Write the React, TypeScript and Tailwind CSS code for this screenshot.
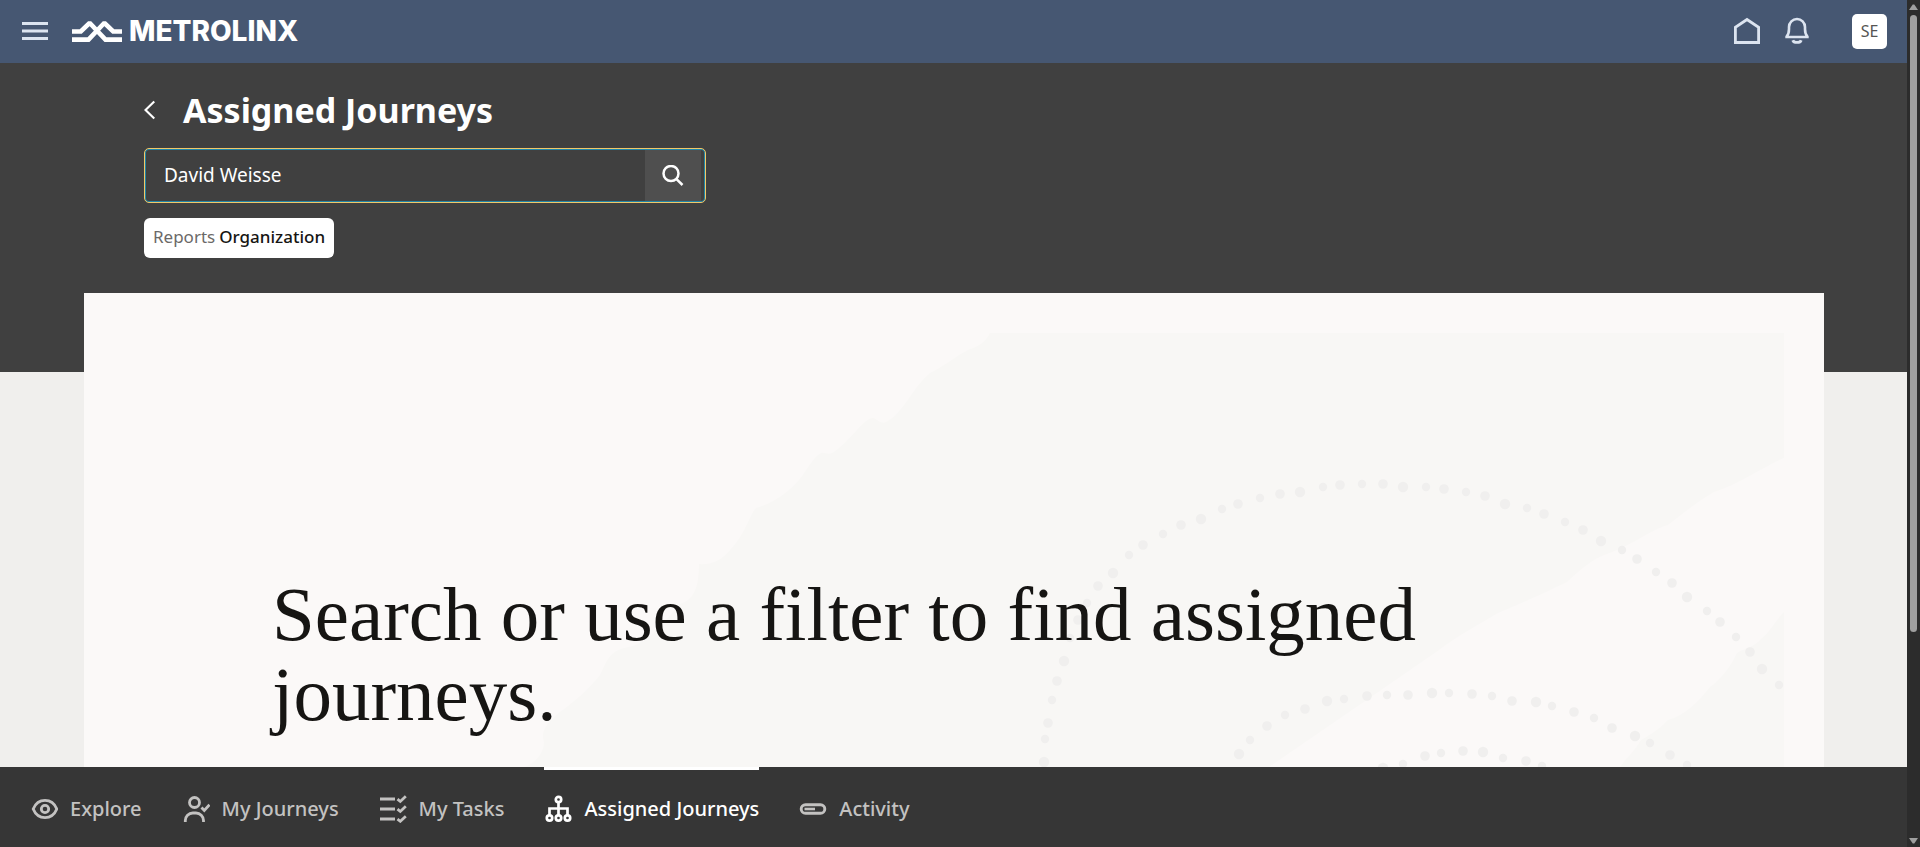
import type { ReactNode } from "react";

type Dot = [number, number];

const outerRing: Dot[] = [
  [1044, 762], [1045, 739], [1048, 723], [1052, 700], [1057, 681], [1064, 661], [1070, 638],
  [1078, 620], [1087, 603], [1098, 586], [1113, 573], [1129, 555], [1143, 545], [1163, 534],
  [1181, 525], [1201, 519], [1222, 509], [1238, 504], [1260, 498], [1280, 494], [1300, 492],
  [1323, 487], [1340, 485], [1362, 484], [1383, 484], [1403, 487], [1426, 487], [1444, 489],
  [1466, 492], [1485, 496], [1505, 504], [1527, 508], [1544, 514], [1565, 522], [1583, 530],
  [1601, 541], [1622, 550], [1637, 559], [1656, 572], [1672, 583], [1687, 597], [1707, 611],
  [1720, 622], [1736, 637], [1750, 652], [1762, 669], [1779, 685],
];

const middleRing: Dot[] = [
  [1239, 754], [1250, 740], [1267, 726], [1285, 715], [1305, 709], [1327, 701], [1344, 699],
  [1367, 696], [1387, 695], [1408, 695], [1432, 693], [1449, 693], [1472, 694], [1492, 696],
  [1512, 701], [1536, 702], [1552, 706], [1574, 712], [1594, 718], [1612, 728], [1635, 736],
  [1650, 743], [1670, 755], [1687, 765],
];

const innerRing: Dot[] = [
  [1383, 768], [1403, 764], [1425, 756], [1441, 753], [1463, 751], [1483, 752], [1503, 758],
  [1526, 761], [1542, 766],
];

const dotRadii = [5.2, 4.2, 4.8, 4.2, 4.8];

function Backdrop() {
  return (
    <svg
      className="pointer-events-none absolute top-10 right-10 h-[434px] w-[1260px]"
      viewBox="524 333 1260 434"
      aria-hidden="true"
    >
      <path
        fill="#f8f7f5"
        d="M990 333C985 343 977 347 970 349C957 355 948 364 930 373C912 388 903 414 886 422C880 425 876 417 872 418C862 420 848 444 832 453C828 455 824 452 821 453C812 458 806 472 799 480C790 490 777 502 756 508C750 514 745 535 730 550C722 560 712 565 699 564C699 582 696 600 680 604C664 622 650 642 629 647C608 650 606 664 600 675C588 690 574 702 560 712C548 722 540 730 544 742C544 754 534 764 524 767H1269L1384 688L1439 650C1460 634 1480 624 1498 613C1530 600 1550 590 1567 582C1582 568 1592 560 1604 555C1632 546 1650 530 1668 525C1690 508 1700 500 1714 492C1740 484 1764 466 1784 458V333Z"
      />
      <path
        fill="#f8f7f5"
        d="M1784 612C1776 620 1770 632 1762 638C1754 648 1744 648 1737 653C1730 668 1720 680 1710 687C1698 702 1684 716 1668 720C1656 732 1648 736 1641 740C1634 752 1626 758 1620 767H1784Z"
      />
      <g fill="#f0efee">
        {[outerRing, middleRing, innerRing].map((ring) =>
          ring.map(([x, y], i) => (
            <circle key={`${x}-${y}`} cx={x} cy={y} r={dotRadii[i % dotRadii.length]} />
          )),
        )}
      </g>
    </svg>
  );
}

function LogoMark() {
  return (
    <svg className="h-6 w-[52px]" viewBox="0 0 52 24" fill="none" stroke="#fff" strokeWidth="4.6" aria-hidden="true">
      <path d="M1 12.500H9.800L18 4.500H19.200L34.500 20.600H51" />
      <path d="M1 20.600H17.500L32.800 4.500H34L42.200 12.500H51" />
    </svg>
  );
}

const iconProps = {
  viewBox: "0 0 28 28",
  fill: "none",
  stroke: "currentColor",
  "aria-hidden": true,
} as const;

function ExploreIcon() {
  return (
    <svg {...iconProps} className="size-7" strokeWidth="2.8">
      <path d="M3.200 14C5.500 8.400 9.500 5.400 15 5.400S24.500 8.400 26.800 14C24.500 19.600 20.500 22.600 15 22.600S5.500 19.600 3.200 14Z" />
      <circle cx="15" cy="14" r="3.700" />
    </svg>
  );
}

function PersonCheckIcon() {
  return (
    <svg {...iconProps} className="size-7" strokeWidth="2.800">
      <circle cx="12.500" cy="7.500" r="5" />
      <path d="M3.300 27V25.500A7.500 7.500 0 0 1 10.800 18H14A7.500 7.500 0 0 1 21.500 25.500V27" />
      <path d="M19.500 12.500L22.300 15.500L27.500 9.700" />
    </svg>
  );
}

function TasksIcon() {
  return (
    <svg {...iconProps} className="size-7" strokeWidth="2.800">
      <path d="M1 4H16M1 14H16M1 24H16" />
      <path d="M18.500 4.200L21.300 6.500L26.800 1.300M18.500 14.200L21.300 16.500L26.800 11.300M18.500 24.200L21.300 26.300L26.800 21.300" />
    </svg>
  );
}

function HierarchyIcon() {
  return (
    <svg {...iconProps} className="size-7" strokeWidth="2.700">
      <circle cx="14.500" cy="4.500" r="2.700" />
      <circle cx="5.500" cy="23" r="2.700" />
      <circle cx="14.500" cy="23" r="2.700" />
      <circle cx="23.500" cy="23" r="2.700" />
      <path d="M14.500 7.200V20.300M5.500 20.300V13.500H23.500V20.300" />
    </svg>
  );
}

function ActivityIcon() {
  return (
    <svg {...iconProps} className="size-7" strokeWidth="2.900">
      <rect x="2.200" y="9.700" width="23.600" height="8.600" rx="4.300" />
      <path d="M5.500 14H16" strokeWidth="2.600" />
    </svg>
  );
}

const tabs: { label: string; icon: ReactNode; active?: boolean }[] = [
  { label: "Explore", icon: <ExploreIcon /> },
  { label: "My Journeys", icon: <PersonCheckIcon /> },
  { label: "My Tasks", icon: <TasksIcon /> },
  { label: "Assigned Journeys", icon: <HierarchyIcon />, active: true },
  { label: "Activity", icon: <ActivityIcon /> },
];

function TopBar() {
  return (
    <header className="flex h-[63px] shrink-0 items-center bg-[#465772] pr-5 pb-px pl-[21px] text-[#dce4f0]">
      <button type="button" aria-label="Navigation menu" className="mr-[22px]">
        <svg {...iconProps} className="size-7" strokeWidth="2.800">
          <path d="M1 6.500H27M1 14H27M1 21.500H27" />
        </svg>
      </button>
      <a href="#home" className="flex items-center gap-1.5 text-white">
        <LogoMark />
        <span className="font-['Inter',sans-serif] text-[28px] leading-7 font-extrabold">METROLINX</span>
      </a>
      <div className="ml-auto flex items-center">
        <button type="button" aria-label="Home" className="mr-[22px]">
          <svg {...iconProps} className="size-7" strokeWidth="2.800">
            <path d="M2.400 25.500V10.300L14 2.500L25.600 10.300V25.500Z" />
          </svg>
        </button>
        <button type="button" aria-label="Notifications" className="mr-[41px]">
          <svg {...iconProps} className="size-7" strokeWidth="2.600">
            <path d="M3.600 19.600C5.500 17.500 6 15.500 6 12V10A8 8 0 0 1 22 10V12C22 15.500 22.500 17.500 24.400 19.600V20H3.600Z" />
            <path d="M9.800 23.200C10.800 26.200 17.200 26.200 18.200 23.200" strokeWidth="2.800" />
          </svg>
        </button>
        <button
          type="button"
          aria-label="Settings and actions"
          className="flex size-[35px] items-center justify-center rounded-[5px] bg-white text-base text-[#565554]"
        >
          SE
        </button>
      </div>
    </header>
  );
}

function Hero() {
  return (
    <section className="h-[309px] bg-[#404040] px-36 pt-[23px] text-white">
      <div className="flex items-center">
        <button type="button" aria-label="Back" className="mr-7">
          <svg className="h-5 w-[11px]" viewBox="0 0 11 20" fill="none" stroke="currentColor" strokeWidth="2.200" aria-hidden="true">
            <path d="M10.300 1.500L1.500 10L10.300 18.500" />
          </svg>
        </button>
        <h1 className="text-[34px] leading-[48px] font-bold">Assigned Journeys</h1>
      </div>
      <form
        role="search"
        onSubmit={(event) => event.preventDefault()}
        className="mt-3.5 flex h-[55px] w-[562px] rounded-[5px] border border-[#f0c869] p-px pr-1 shadow-[inset_0_0_0_1px_#1f84a8]"
      >
        <input
          type="text"
          aria-label="Search for a person"
          defaultValue="David Weisse"
          className="min-w-0 flex-1 bg-transparent pl-[18px] text-[19px] outline-none"
        />
        <button type="submit" aria-label="Search" className="flex w-14 items-center justify-center bg-[#4f4f4f]">
          <svg className="size-[22px]" viewBox="0 0 22 22" fill="none" stroke="currentColor" strokeWidth="2.500" aria-hidden="true">
            <circle cx="9" cy="8.500" r="7.500" />
            <path d="M14.300 13.800L20.500 20" />
          </svg>
        </button>
      </form>
      <button
        type="button"
        className="mt-[15px] flex h-10 items-center gap-1 rounded-md bg-white px-[9px] pb-0.5 text-[17px] text-[#6b6967]"
      >
        Reports <span className="font-medium text-[#161513]">Organization</span>
      </button>
    </section>
  );
}

function ScrollTrack() {
  return (
    <div className="flex w-[13px] shrink-0 flex-col items-center bg-[#2c2c2c] pt-1 pb-[3px]" aria-hidden="true">
      <svg className="h-1.5 w-[9px]" viewBox="0 0 9 6" fill="#9f9f9f">
        <path d="M3.700 0.500H5.300L9 6H0Z" />
      </svg>
      <div className="mt-[5px] h-[73.4%] w-[7px] rounded-full bg-[#9f9f9f]" />
      <svg className="mt-auto h-1.5 w-[9px]" viewBox="0 0 9 6" fill="#9f9f9f">
        <path d="M0 0H9L5.300 5.500H3.700Z" />
      </svg>
    </div>
  );
}

export default function App() {
  return (
    <div className="flex h-screen overflow-hidden font-['Noto_Sans','Open_Sans',sans-serif]">
      <div className="flex min-w-0 flex-1 flex-col">
        <TopBar />
        <main className="min-h-0 flex-1 overflow-hidden bg-[#f0efed]">
          <Hero />
          <section className="relative mr-[83px] ml-[84px] -mt-[79px] min-h-[600px] overflow-hidden bg-[#fbf9f8] px-[188px] pt-[281px]">
            <Backdrop />
            <h2 className="relative max-w-[1200px] font-['Liberation_Serif',serif] text-[77px] leading-[80px] text-[#161513]">
              Search or use a filter to find assigned journeys.
            </h2>
          </section>
        </main>
        <nav className="flex h-20 shrink-0 gap-10 bg-[#363636] pl-[30px]" aria-label="Journeys">
          {tabs.map(({ label, icon, active }) => (
            <a
              key={label}
              href={`#${label.toLowerCase().replace(" ", "-")}`}
              aria-current={active ? "page" : undefined}
              className={
                active
                  ? "flex items-center gap-3 border-t-[3px] border-white text-xl font-medium text-white"
                  : "flex items-center gap-3 border-t-[3px] border-transparent text-xl font-medium text-[#c3c2c1]"
              }
            >
              {icon}
              {label}
            </a>
          ))}
        </nav>
      </div>
      <ScrollTrack />
    </div>
  );
}
